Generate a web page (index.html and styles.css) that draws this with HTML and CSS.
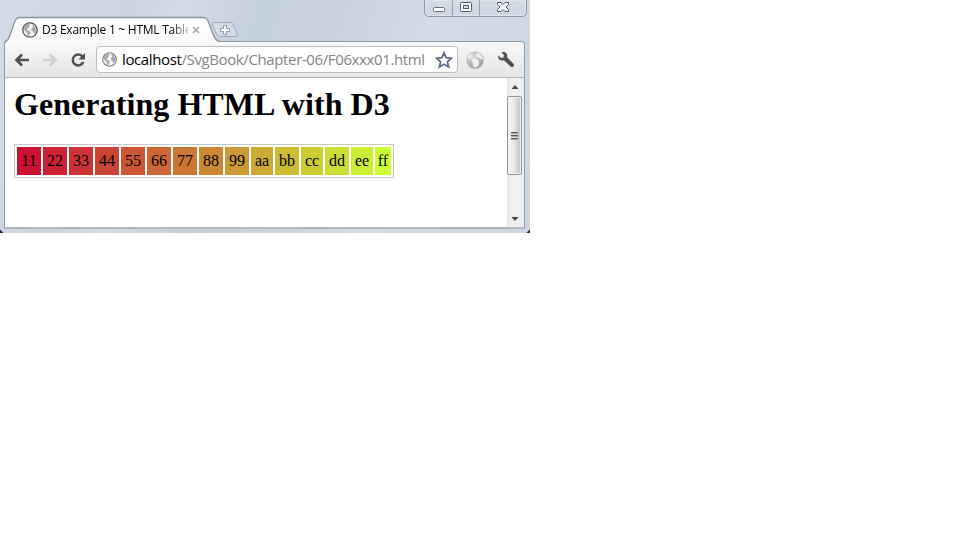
FILE: index.html
```
<!DOCTYPE html>
<html lang="en">
<head>
<meta charset="utf-8">
<title>D3 Example 1 ~ HTML Table</title>
<link rel="stylesheet" href="styles.css">
</head>
<body>
<svg width="0" height="0" class="defs">
  <symbol id="globe" viewBox="0 0 16 16">
    <circle cx="8" cy="8" r="7.2" fill="#f4f4f4" stroke="currentColor" stroke-width="1.300"/>
    <path d="M2 5 4 2.6 7 1.6 8 3 6.800 4.200 7.200 5.600 5.400 6.600 5 8.200 7.400 9 8.600 10.600 7.400 12.200 7.200 14.200 5.200 13 5 10.600 3 8.800 1.800 7zM10 2.200 12.600 3.800 14.200 7 13.600 10.400 12 12 11 9.600 9.400 8.600 9.600 6.200 11 5.200z" fill="#aaa"/>
  </symbol>
</svg>
<div class="window">
  <header class="titlebar">
    <div class="tab">
      <svg class="tab-shape" width="216" height="27" viewBox="0 0 216 27">
        <defs><linearGradient id="tg" x2="0" y2="1"><stop stop-color="#fff"/><stop offset="1" stop-color="#f8f8f8"/></linearGradient></defs>
        <path d="M0 27C4 26 5 23 6 20L11 6C12 3.500 13 2.500 16 2.500H198C202 2.500 203 3.500 204 6L209 19C210.500 23 212 26.500 216 26.500V27z" fill="url(#tg)"/>
        <path d="M0 27C4 26 5 23 6 20L11 6C12 3.500 13 2.500 16 2.500H198C202 2.500 203 3.500 204 6L209 19C210.500 23 212 26.500 216 26.500" fill="none" stroke="#8a949f" stroke-width="1.300"/>
      </svg>
      <div class="tab-content">
        <svg class="tab-icon"><use href="#globe"/></svg>
        <span class="tab-title">D3 Example 1 ~ HTML Table</span>
        <svg class="tab-close" viewBox="0 0 8 8"><path d="m1 1 6 6M7 1 1 7" stroke="#a8a8a8" stroke-width="1.600"/></svg>
      </div>
    </div>
    <svg class="new-tab" width="28" height="18" viewBox="0 0 28 18">
      <path d="M3 1.500H19Q21.500 1.500 22.500 4L26 13Q27 15.500 24 15.500H9Q6.500 15.500 5.500 13L1.500 4Q.5 1.500 3 1.500z" fill="#d3dce6" stroke="#a0abb9"/>
      <path d="M12.500 4.500h3v3h3v3h-3v3h-3v-3h-3v-3h3z" fill="#fff" stroke="#929eac"/>
    </svg>
    <div class="controls">
      <div class="control minimize"><svg width="14" height="14" viewBox="0 0 14 14"><rect x="1.500" y="7.500" width="11" height="4" rx="1" fill="#fff" stroke="#626a7c"/></svg></div>
      <div class="control maximize"><svg width="14" height="14" viewBox="0 0 14 14"><rect x="1.500" y="2.500" width="11" height="9" rx="1" fill="#fff" stroke="#535a6d"/><rect x="4.500" y="5.500" width="5" height="3" fill="#d9e0e9" stroke="#535a6d"/></svg></div>
      <div class="control close"><svg width="14" height="14" viewBox="0 0 14 14"><path d="M1.500 2.500h3.500L7 4.500l2-2h3.500v2L10 7l2.500 2.500v2H9l-2-2-2 2H1.500v-2L4 7 1.500 4.500z" fill="#fff" stroke="#535a6d"/></svg></div>
    </div>
  </header>
  <div class="frame">
    <div class="toolbar">
      <svg class="nav" width="16" height="16" viewBox="0 0 16 16"><path d="M15 8H3M8 2.500 2.500 8 8 13.500" fill="none" stroke="#505050" stroke-width="2.700"/></svg>
      <svg class="nav" width="16" height="16" viewBox="0 0 16 16"><path d="M1 8h12M8 2.500 13.500 8 8 13.500" fill="none" stroke="#d0d0d0" stroke-width="2.700"/></svg>
      <svg class="nav" width="16" height="16" viewBox="0 0 16 16"><path d="M12.300 4.500A5.400 5.400 0 1 0 13.200 10" fill="none" stroke="#505050" stroke-width="2.500"/><path d="M15 1v6.500H8.500z" fill="#505050"/></svg>
      <div class="address">
        <svg class="address-icon"><use href="#globe"/></svg>
        <span class="url"><span class="host">localhost</span>/SvgBook/Chapter-06/F06xxx01.html</span>
        <svg class="star" width="18" height="18" viewBox="0 0 18 18"><path d="m9 1.800 2.100 4.900 5.300.5-4 3.500 1.200 5.300L9 13.200 4.400 16l1.200-5.300-4-3.500 5.300-.5z" fill="#fff" stroke="#626f8c" stroke-width="1.800"/></svg>
      </div>
      <svg class="extension" width="18" height="18" viewBox="0 0 18 18">
        <defs><radialGradient id="eg" cx=".35" cy=".3" r=".75"><stop stop-color="#ddd"/><stop offset="1" stop-color="#9c9c9c"/></radialGradient></defs>
        <circle cx="9" cy="9" r="8.700" fill="url(#eg)"/><path d="M10 2.500l3-.5 3.500 4 .5 3-2.500-1-2-2-2 .5zM5.500 9l3-2 4 2 .500 4-2.500 3.500-3-.5-.5-3.500zM1.500 6 4 3l2 .5-1 3-3 2z" fill="#f0f0f0"/>
      </svg>
      <svg class="wrench" width="18" height="18" viewBox="0 0 18 18"><path d="M4.500 1.500C8.500 0 11 3 10 6.300L16.700 13Q17.600 14 16.500 15.300 15 16.800 13.800 15.800L7 9.200C3.500 10.500.3 8 1.300 4.500L4 7l2.500-.5L7 4z" fill="#505050"/></svg>
    </div>
    <div class="viewport">
      <main class="page">
        <h1>Generating HTML with D3</h1>
        <table>
          <tr><td class="c1">11</td><td class="c2">22</td><td class="c3">33</td><td class="c4">44</td><td class="c5">55</td><td class="c6">66</td><td class="c7">77</td><td class="c8">88</td><td class="c9">99</td><td class="ca">aa</td><td class="cb">bb</td><td class="cc">cc</td><td class="cd">dd</td><td class="ce">ee</td><td class="cf">ff</td></tr>
        </table>
      </main>
      <div class="scrollbar">
        <svg class="arrow" width="16" height="18" viewBox="0 0 16 18"><path d="m4.500 11 3.500-4 3.500 4z" fill="#444"/></svg>
        <div class="thumb"><i></i><i></i><i></i></div>
        <svg class="arrow last" width="16" height="18" viewBox="0 0 16 18"><path d="m4.500 8 3.500 4 3.500-4z" fill="#444"/></svg>
      </div>
    </div>
  </div>
</div>
</body>
</html>
```
FILE: styles.css
```
* { box-sizing: border-box; }
body { margin: 0; background: #fff; }
svg { display: block; flex: none; }
.defs { position: absolute; }
.window {
  width: 530px;
  height: 233px;
  display: flex;
  flex-direction: column;
  padding: 0 5px 4px 4px;
  background:
    linear-gradient(45deg, #222b36 2px, transparent 3px),
    linear-gradient(-45deg, #222b36 2px, transparent 3px),
    linear-gradient(110deg, #d3dce7 0, #cbd4df 22%, #d3dce6 30%, #c5d0dd 43%, #c9d3df 57%, #d2dbe6 72%, #cbd6e2 100%);
}
.titlebar { display: flex; height: 41px; flex: none; }
.tab { display: grid; width: 211px; height: 27px; margin: 15px 0 0 0; z-index: 1; }
.tab-shape, .tab-content { grid-area: 1 / 1; }
.tab-content { display: flex; align-items: center; height: 27px; padding-left: 18px; padding-top: 3px; }
.tab-icon { width: 16px; height: 16px; color: #555; }
.tab-title {
  width: 146px;
  margin-left: 4px;
  overflow: hidden;
  white-space: pre;
  font: 12px/18px "Open Sans", "Noto Sans", sans-serif;
  letter-spacing: -.25px;
  color: #000;
  -webkit-mask-image: linear-gradient(90deg, #000 128px, rgba(0, 0, 0, .2) 147px);
  mask-image: linear-gradient(90deg, #000 128px, rgba(0, 0, 0, .2) 147px);
}
.tab-close { width: 8px; height: 8px; margin-left: 4px; }
.new-tab { margin: 21px 0 0 -4px; }
.controls {
  display: flex;
  width: 103px;
  height: 17px;
  margin-left: auto;
  margin-right: -2px;
  border: 1px solid #8b95a4;
  border-top: 0;
  border-radius: 0 0 5px 5px;
  background: linear-gradient(#d5dde6, #cdd6e1);
  box-shadow: inset 0 0 0 1px #dde4ec;
}
.control { display: flex; justify-content: center; height: 16px; }
.minimize { width: 28px; border-right: 1px solid #98a2b1; }
.maximize { width: 27px; border-right: 1px solid #98a2b1; }
.close { flex: 1; }
.frame {
  display: flex;
  flex-direction: column;
  flex: 1;
  min-height: 0;
  border: 1px solid #8f9aa6;
  border-bottom: 2px solid #b4b6b8;
  border-radius: 3px 4px 0 0;
}
.toolbar {
  display: flex;
  align-items: center;
  height: 36px;
  flex: none;
  padding-left: 9px;
  border-bottom: 1px solid #b6b6b6;
  border-radius: 3px 3px 0 0;
  background: linear-gradient(#f8f8f8, #e5e5e5);
}
.nav { margin-right: 12px; }
.nav + .nav + .nav { margin-right: 10px; }
.address {
  display: flex;
  align-items: center;
  width: 362px;
  height: 27px;
  padding-left: 5px;
  border: 1px solid #bdbdbd;
  border-radius: 4px;
  background: #fff;
}
.address-icon { width: 15px; height: 15px; color: #888; }
.url {
  width: 311px;
  margin: -2px 0 0 5px;
  white-space: nowrap;
  font: 15px/22px "Open Sans", "Noto Sans", sans-serif;
  letter-spacing: -.38px;
  color: #858585;
}
.host { color: #000; }
.star { margin-left: 2px; }
.extension { margin-left: 8px; }
.wrench { margin-left: 13px; }
.viewport { display: flex; flex: 1; min-height: 0; background: #fff; }
.page { flex: 1; padding: 8px 0 0 9px; font-family: "Liberation Serif", serif; color: #000; }
h1 { margin: 0 0 21px; font-size: 32px; line-height: 37px; letter-spacing: .07px; white-space: nowrap; }
table { border: 1px solid #c8c8c8; border-spacing: 2px; font-size: 16px; line-height: 18px; }
td { height: 28px; width: 24px; padding: 5px 0; text-align: center; }
.c1 { background: #cc1133; }
.c2 { background: #cc2233; }
.c3 { background: #cc3333; }
.c4 { background: #cc4433; }
.c5 { background: #cc5533; }
.c6 { background: #cc6633; }
.c7 { background: #cc7733; }
.c8 { background: #cc8833; }
.c9 { background: #cc9933; }
.ca { background: #ccaa33; width: 22px; }
.cb { background: #ccbb33; }
.cc { background: #cccc33; width: 22px; }
.cd { background: #ccdd33; }
.ce { background: #ccee33; width: 22px; }
.cf { background: #ccff33; width: 16px; }
.scrollbar { display: flex; flex-direction: column; width: 17px; background: linear-gradient(90deg, #e5e5e5, #f1f1f1 4px, #ededed); }
.thumb {
  display: flex;
  flex-direction: column;
  justify-content: center;
  align-items: center;
  gap: 1px;
  width: 15px;
  height: 79px;
  border: 1px solid #949494;
  border-radius: 2px;
  background: linear-gradient(90deg, #f6f6f6, #e8e8ea 45%, #c8c8cc 90%, #ddd);
  box-shadow: inset 0 0 0 1px #f0f0f0;
}
.thumb i { width: 7px; height: 2px; background: #555; border-bottom: 1px solid #aaa; }
.last { margin-top: auto; }
```
